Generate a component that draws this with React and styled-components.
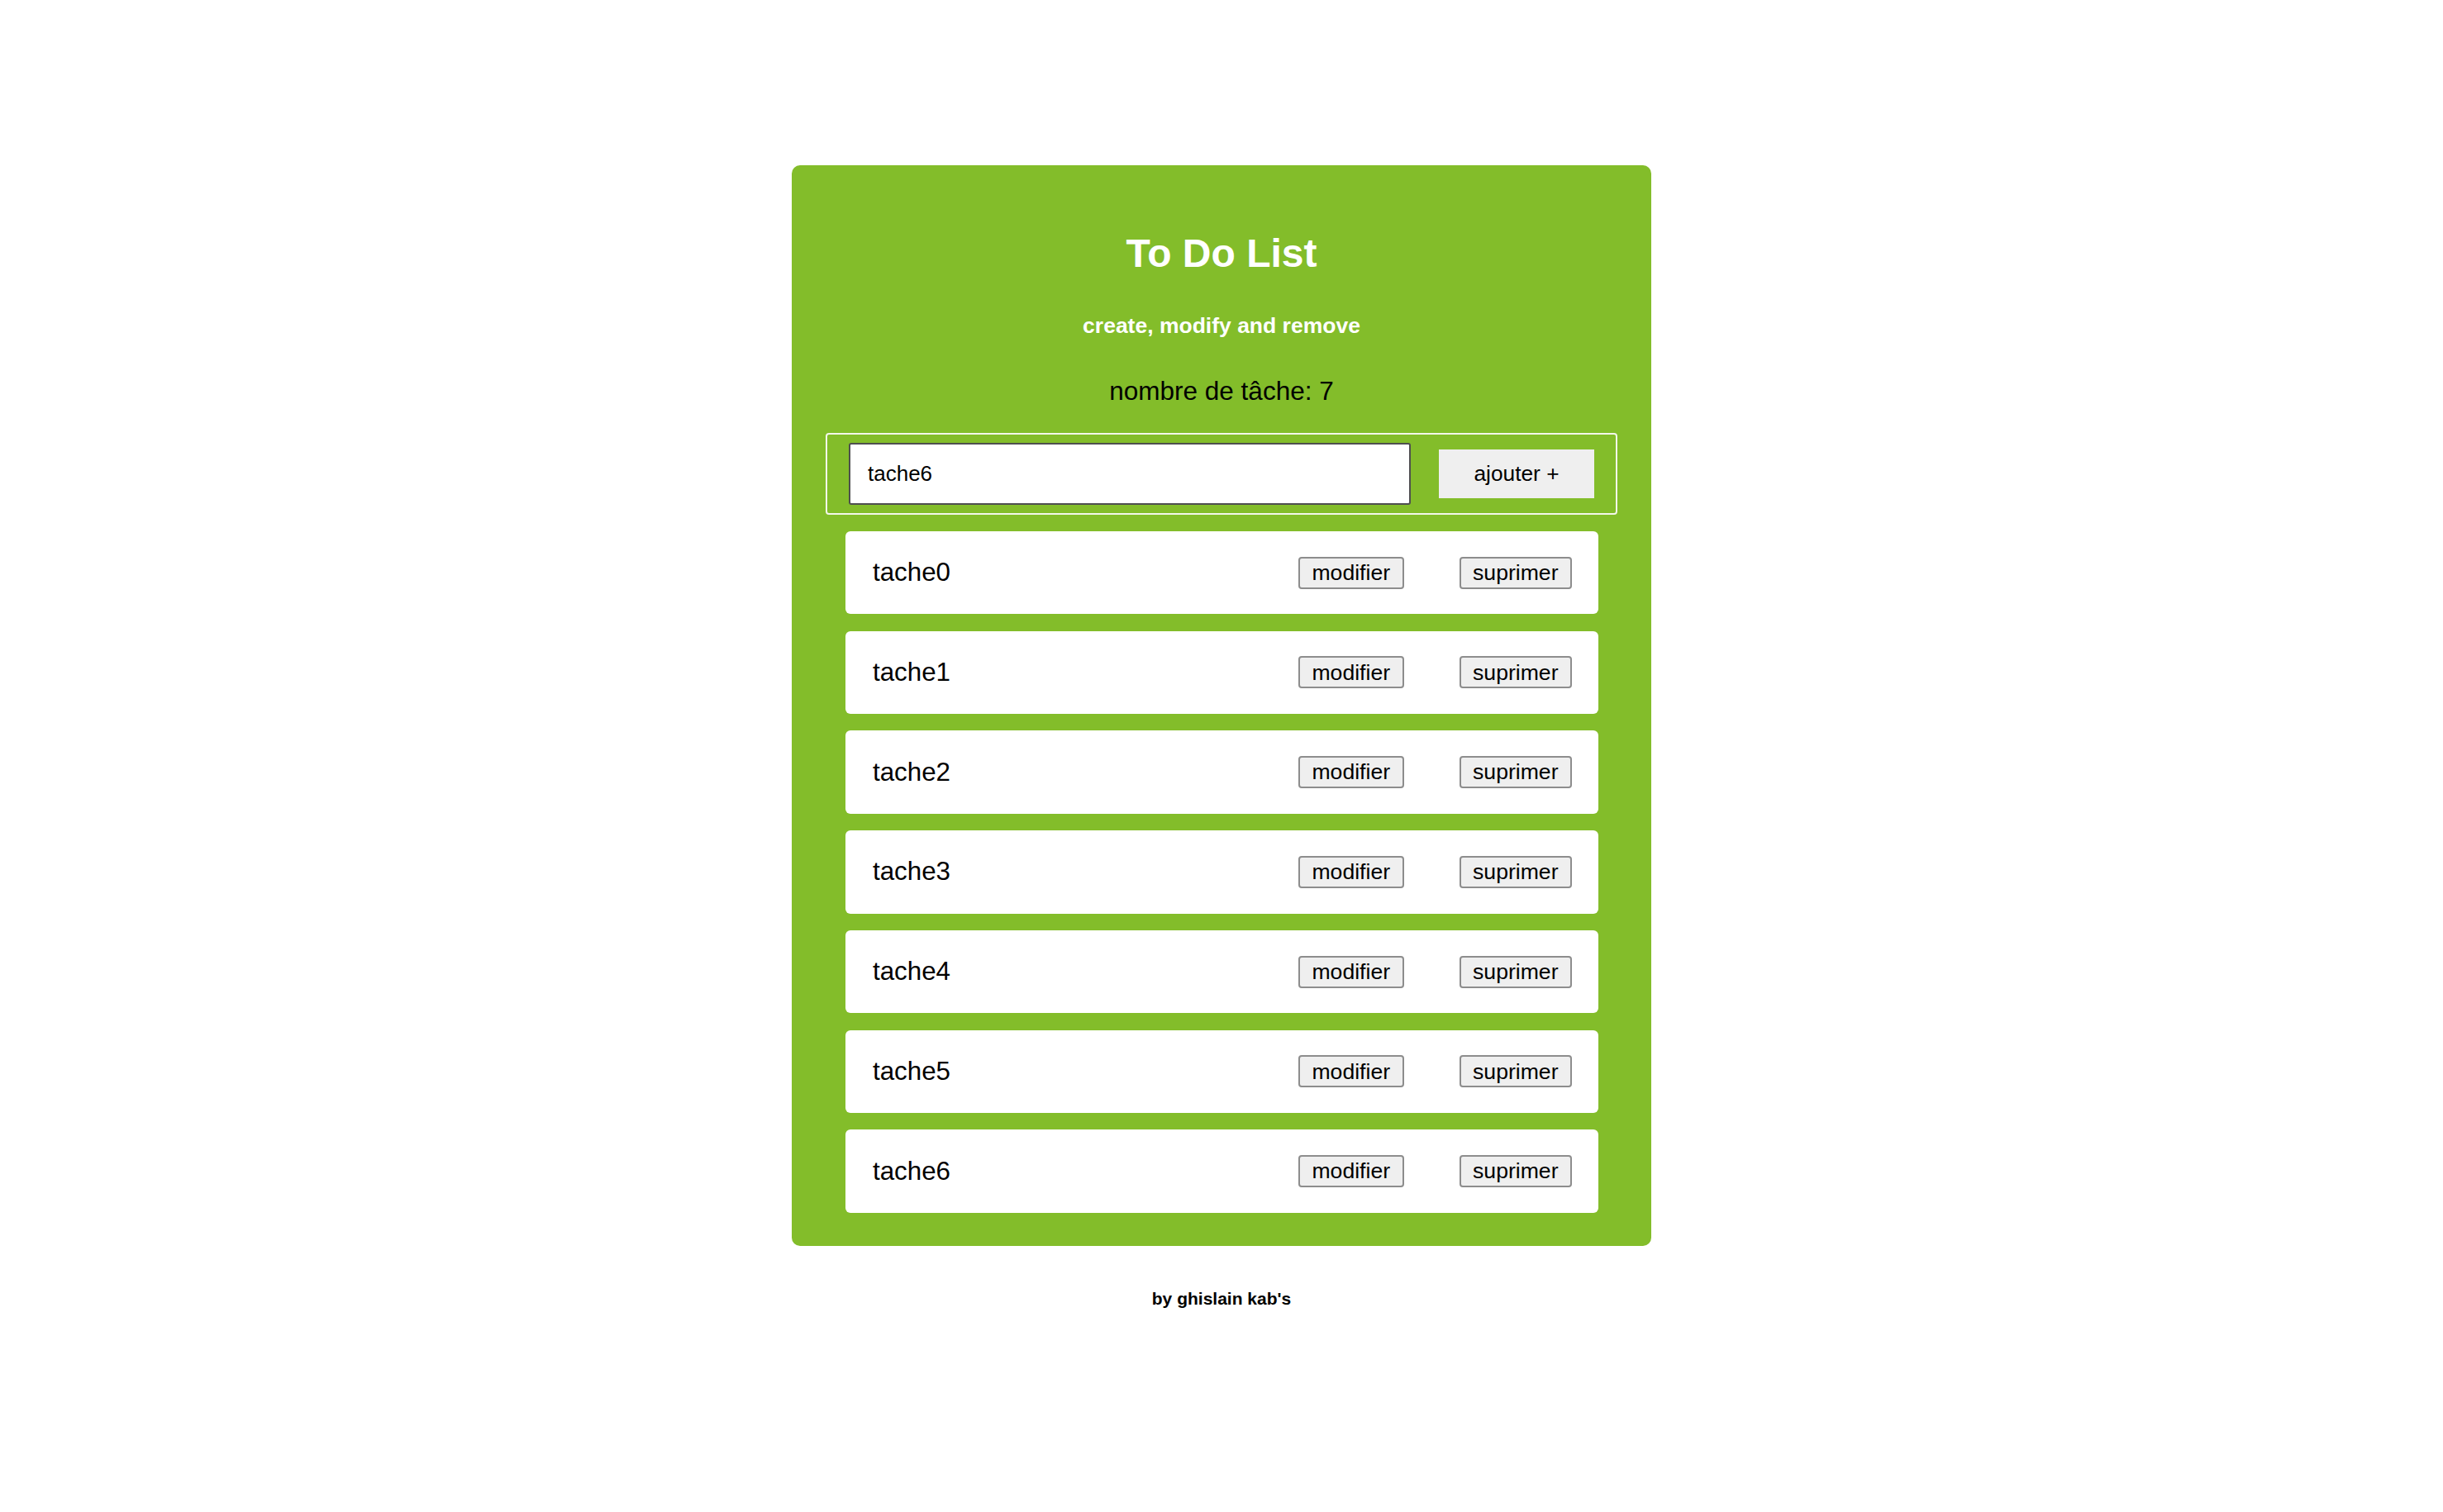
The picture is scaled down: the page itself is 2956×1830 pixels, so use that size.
import { useState } from "react";
import styled, { createGlobalStyle } from "styled-components";

const GlobalStyle = createGlobalStyle`
  html, body {
    margin: 0;
    padding: 0;
    background: #ffffff;
    font-family: "Liberation Sans", Arial, sans-serif;
  }
`;

const initialTasks = ["tache0", "tache1", "tache2", "tache3", "tache4", "tache5", "tache6"];

export default function App() {
  const [tasks, setTasks] = useState(initialTasks);
  const [value, setValue] = useState("tache6");

  const addTask = () => {
    if (!value.trim()) return;
    setTasks([...tasks, value]);
  };

  const editTask = (index) => {
    const next = [...tasks];
    next[index] = value || next[index];
    setTasks(next);
  };

  const removeTask = (index) => {
    setTasks(tasks.filter((_, i) => i !== index));
  };

  return (
    <>
      <GlobalStyle />
      <Page>
        <Card>
          <Title>To Do List</Title>
          <Subtitle>create, modify and remove</Subtitle>
          <Count>nombre de tâche: {tasks.length}</Count>
          <Form
            onSubmit={(e) => {
              e.preventDefault();
              addTask();
            }}
          >
            <TaskInput value={value} onChange={(e) => setValue(e.target.value)} />
            <AddButton type="submit">ajouter +</AddButton>
          </Form>
          <TaskList>
            {tasks.map((task, i) => (
              <TaskRow key={i}>
                <TaskName>{task}</TaskName>
                <Actions>
                  <ActionButton onClick={() => editTask(i)}>modifier</ActionButton>
                  <ActionButton onClick={() => removeTask(i)}>suprimer</ActionButton>
                </Actions>
              </TaskRow>
            ))}
          </TaskList>
        </Card>
        <Footer>by ghislain kab's</Footer>
      </Page>
    </>
  );
}

// styled-components
const Page = styled.div`
  display: flex;
  flex-direction: column;
  align-items: center;
  padding-top: 200px;
  min-height: 1830px;
  box-sizing: border-box;
`;

const Card = styled.div`
  width: 1040px;
  box-sizing: border-box;
  padding: 79px 41px 40px;
  background-color: #83bd2a;
  border-radius: 10px;
  display: flex;
  flex-direction: column;
`;

const Title = styled.h1`
  margin: 0;
  text-align: center;
  color: #ffffff;
  font-size: 48px;
  font-weight: bold;
  line-height: 1.15;
`;

const Subtitle = styled.h3`
  margin: 45px 0 0;
  text-align: center;
  color: #ffffff;
  font-size: 26.5px;
  font-weight: bold;
  line-height: 1.15;
`;

const Count = styled.p`
  margin: 45px 0 0;
  text-align: center;
  color: #000000;
  font-size: 31.5px;
  line-height: 1.15;
`;

const Form = styled.form`
  margin-top: 33px;
  height: 99px;
  box-sizing: border-box;
  padding: 0 26px;
  border: 2px solid #f3f7ea;
  border-radius: 4px;
  display: flex;
  align-items: center;
  gap: 34px;
`;

const TaskInput = styled.input`
  flex: 1;
  height: 75px;
  box-sizing: border-box;
  padding: 0 21px;
  border: 2px solid #4f4f4f;
  border-radius: 3px;
  background: #ffffff;
  color: #000000;
  font-family: "Liberation Sans", Arial, sans-serif;
  font-size: 26px;
  outline: none;
`;

const AddButton = styled.button`
  width: 188px;
  height: 59px;
  border: none;
  border-radius: 0;
  background: #efefef;
  color: #000000;
  font-family: "Liberation Sans", Arial, sans-serif;
  font-size: 26.3px;
  cursor: pointer;
`;

const TaskList = styled.ul`
  list-style: none;
  margin: 20px 23px 0 24px;
  padding: 0;
  display: flex;
  flex-direction: column;
  gap: 20.25px;
`;

const TaskRow = styled.li`
  height: 100.5px;
  box-sizing: border-box;
  padding: 0 32px 0 33px;
  background: #ffffff;
  border-radius: 6px;
  display: flex;
  align-items: center;
  justify-content: space-between;
`;

const TaskName = styled.span`
  font-size: 31.3px;
  color: #000000;
`;

const Actions = styled.div`
  display: flex;
  align-items: center;
  gap: 67px;
`;

const ActionButton = styled.button`
  height: 39px;
  box-sizing: border-box;
  padding: 0 14.5px;
  border: 2px solid #8d8d8d;
  border-radius: 4px;
  background: #efefef;
  color: #000000;
  font-family: "Liberation Sans", Arial, sans-serif;
  font-size: 26.6px;
  line-height: 1;
  cursor: pointer;
`;

const Footer = styled.p`
  margin: 52px 0 0;
  font-size: 21px;
  font-weight: bold;
  color: #000000;
  line-height: 1.15;
`;
